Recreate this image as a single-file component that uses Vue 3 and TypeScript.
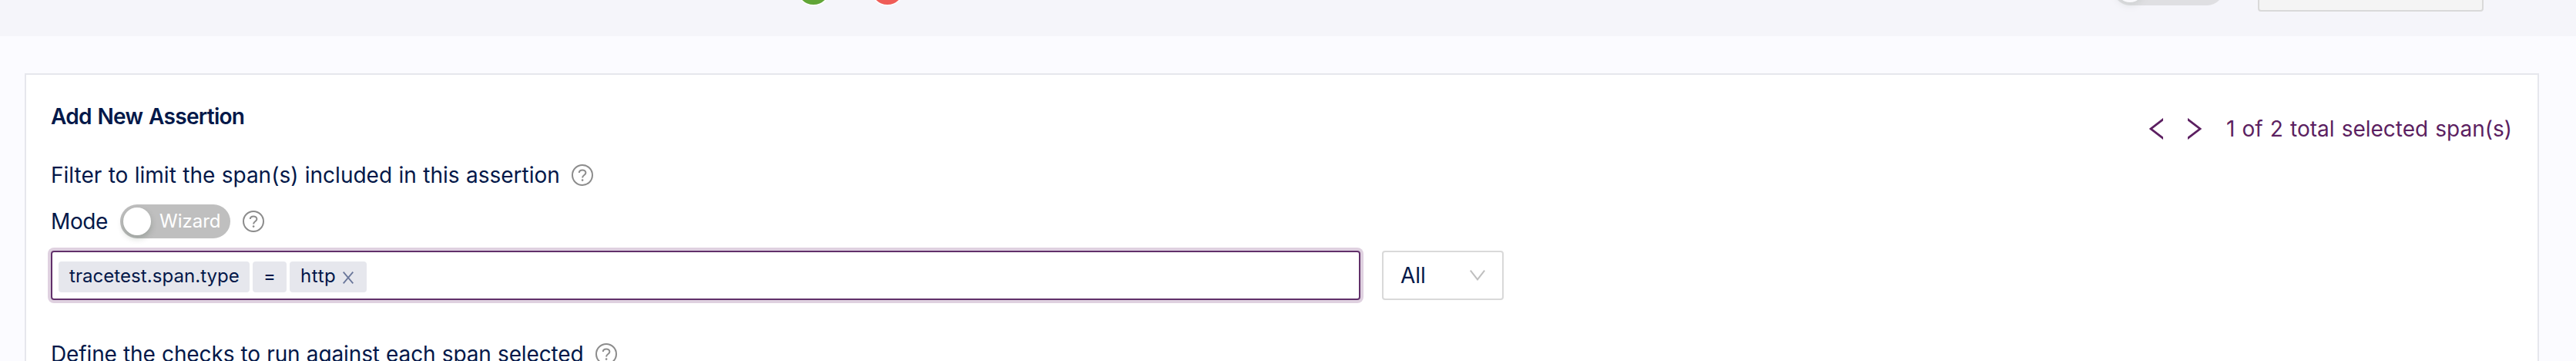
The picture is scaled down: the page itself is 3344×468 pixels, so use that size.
<script setup lang="ts">
const chips: string[] = ['tracetest.span.type', '=']
</script>

<template>
  <main class="page">
    <header class="topbar">
      <span class="dot pass"></span>
      <span class="dot fail"></span>
      <span class="switch faded"><i class="knob"></i></span>
      <span class="top-button"></span>
    </header>
    <section class="card">
      <div class="form">
        <h3 class="title">Add New Assertion</h3>
        <div class="row filter">
          <span class="t-filter">Filter to limit the span(s) included in this assertion</span>
          <svg class="help" viewBox="0 0 28 28"><circle cx="14" cy="14" r="13" /><path d="M9.8 11C9.8 6.2 18.4 6.2 18.4 11C18.4 14.2 14.1 13.8 14.1 17.4" /><circle class="fill" cx="14.1" cy="20.6" r="1.3" /></svg>
        </div>
        <div class="row mode">
          <span class="t-mode">Mode</span>
          <span class="switch"><i class="knob"></i><span class="t-wizard">Wizard</span></span>
          <svg class="help" viewBox="0 0 28 28"><circle cx="14" cy="14" r="13" /><path d="M9.8 11C9.8 6.2 18.4 6.2 18.4 11C18.4 14.2 14.1 13.8 14.1 17.4" /><circle class="fill" cx="14.1" cy="20.6" r="1.3" /></svg>
        </div>
        <div class="row fields">
          <div class="selector">
            <span v-for="(c, i) in chips" :key="c" class="chip" :class="i === 0 ? 'attr' : 'op'">{{ c }}</span>
            <span class="chip val"><span class="t-http">http</span><svg class="close" viewBox="0 0 14 16"><path d="M.7 .7L13.3 15.3M13.3 .7L.7 15.3" /></svg></span>
          </div>
          <div class="select">
            <span class="t-all">All</span>
            <svg class="chevron" viewBox="0 0 20 14"><path d="M.8 .6L10 12.4L19.2 .6" /></svg>
          </div>
        </div>
        <div class="row checks">
          <span class="t-checks">Define the checks to run against each span selected</span>
          <svg class="help" viewBox="0 0 28 28"><circle cx="14" cy="14" r="13" /><path d="M9.8 11C9.8 6.2 18.4 6.2 18.4 11C18.4 14.2 14.1 13.8 14.1 17.4" /><circle class="fill" cx="14.1" cy="20.6" r="1.3" /></svg>
        </div>
      </div>
      <div class="pager">
        <svg class="arrow" viewBox="0 0 18 28"><path d="M20 .2L2 14L20 27.8" /></svg>
        <svg class="arrow next" viewBox="0 0 18 28"><path d="M-2 .2L16 14L-2 27.8" /></svg>
        <span class="t-pager">1 of 2 total selected span(s)</span>
      </div>
    </section>
  </main>
</template>

<style>
body { margin: 0; overflow: hidden; }
</style>

<style scoped>
.page { height: 468px; overflow: hidden; background: #fbfbff; color: #031849; font: 28px/44px Inter, "Liberation Sans", sans-serif; white-space: nowrap; }
.page * { box-sizing: border-box; }
.topbar { height: 47px; background: #f5f5fa; display: flex; align-items: flex-start; padding-left: 1035px; }
.dot { width: 42px; height: 42px; border-radius: 50%; margin-top: -36px; box-shadow: 0 0 0 1.5px #fff; flex: none; }
.pass { background: #61a536; }
.fail { background: #ef5c57; margin-left: 54px; }
.card { width: 3264px; height: 500px; margin: 48px 0 0 32px; border: 2px solid #e6e7ed; background: #fff; display: flex; justify-content: space-between; }
.form { padding: 32px 0 0 32px; }
.row { display: flex; align-items: center; }
.title { margin: 0; height: 44px; font-size: 28px; font-weight: 600; letter-spacing: -.7px; word-spacing: 1.4px; }
.filter { height: 44px; margin-top: 32px; }
.t-filter { width: 660px; word-spacing: .55px; }
.help { width: 28px; height: 28px; fill: none; stroke: #8c8c8c; stroke-width: 2; flex: none; margin-left: 16px; }
.help .fill { fill: #8c8c8c; stroke: none; }
.mode { height: 44px; margin-top: 16px; }
.t-mode { width: 74px; letter-spacing: -.4px; }
.switch { display: flex; align-items: center; width: 143px; height: 44px; border-radius: 22px; background: #bfbfbf; margin-left: 16px; padding-left: 4px; flex: none; color: #fff; font-size: 24px; }
.knob { width: 36px; height: 36px; border-radius: 50%; background: #fff; box-shadow: 0 4px 8px rgba(0, 35, 11, .2); flex: none; }
.t-wizard { margin-left: 11px; }
.faded { opacity: .4; margin: -37px 0 0 1570px; width: 144px; }
.top-button { width: 293px; height: 64px; margin: -49px 0 0 44px; border: 2px solid #d9d9d9; border-radius: 4px; background: #f4f4f4; }
.fields { margin-top: 16px; }
.selector { width: 1700px; height: 64px; border: 2px solid #61306a; border-radius: 4px; box-shadow: 0 0 0 4px #dfd1e0; display: flex; align-items: center; gap: 4px; padding: 4px 0 0 8px; }
.chip { height: 40px; border-radius: 4px; background: #e6e7ed; display: flex; align-items: center; font-size: 24px; padding: 0 0 2px 14px; }
.attr { width: 248px; letter-spacing: .06px; }
.op { width: 44px; padding-left: 0; justify-content: center; }
.val { width: 100px; }
.t-http { width: 45px; letter-spacing: .6px; }
.close { width: 14px; height: 16px; margin: 3px 0 0 10px; fill: none; stroke: #69769a; stroke-width: 1.8; flex: none; }
.select { width: 158px; height: 64px; margin-left: 28px; border: 2px solid #d9d9d9; border-radius: 4px; display: flex; align-items: center; padding: 0 22px; justify-content: space-between; }
.chevron { width: 20px; height: 14px; fill: none; stroke: #bfbfbf; stroke-width: 2; }
.checks { height: 44px; margin-top: 48px; }
.t-checks { width: 691px; word-spacing: .5px; letter-spacing: -.12px; }
.pager { display: flex; align-items: center; height: 44px; margin-top: 48px; padding-right: 33px; color: #5c1f61; }
.arrow { width: 18px; height: 28px; fill: none; stroke: currentColor; stroke-width: 2.8; overflow: hidden; }
.next { margin-left: 32px; }
.t-pager { margin-left: 32px; word-spacing: 1.25px; }
</style>
